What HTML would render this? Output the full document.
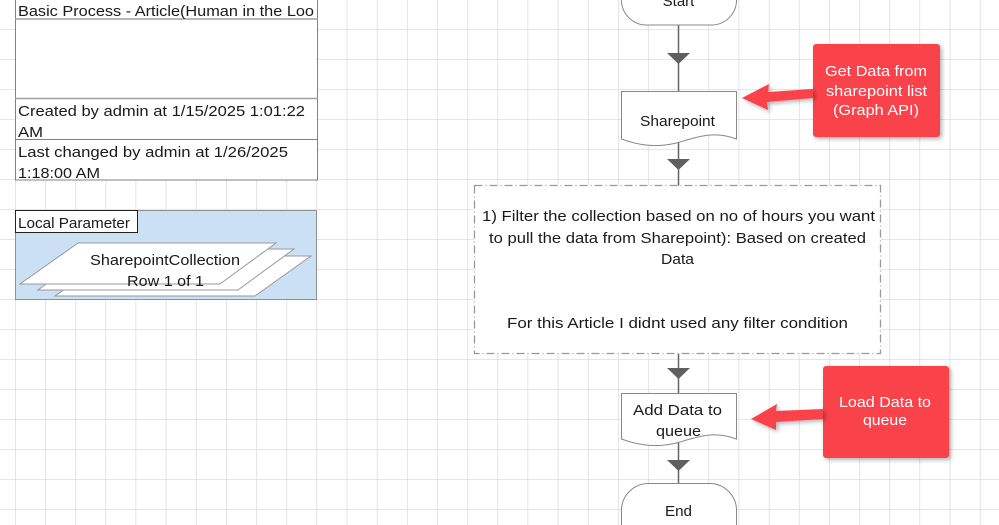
<!DOCTYPE html>
<html><head><meta charset="utf-8"><style>
html,body{margin:0;padding:0;background:#fff;width:999px;height:525px;overflow:hidden;}
svg{display:block;font-family:"Liberation Sans",sans-serif;}
</style></head><body>
<svg width="999" height="525" viewBox="0 0 999 525" xmlns="http://www.w3.org/2000/svg">
<defs>
<pattern id="g" x="15" y="-1" width="30.15" height="30" patternUnits="userSpaceOnUse">
<path d="M0 0V30M0 0H30.15" stroke="#d6d6d6" stroke-width="1.3" fill="none"/>
</pattern>
<filter id="sh" x="-10%" y="-10%" width="130%" height="130%"><feDropShadow dx="2" dy="2" stdDeviation="2" flood-color="#000" flood-opacity="0.3"/></filter>
</defs>
<rect width="999" height="525" fill="url(#g)"/>

<!-- left info box -->
<rect x="15.5" y="-1" width="302" height="181" fill="#fff" stroke="#808080"/>
<line x1="15" y1="19" x2="318" y2="19" stroke="#a0a0a0" stroke-width="1.5"/>
<line x1="15" y1="98.5" x2="318" y2="98.5" stroke="#a0a0a0" stroke-width="1.5"/>
<line x1="15" y1="139.5" x2="318" y2="139.5" stroke="#808080"/>
<g font-size="15" fill="#1a1a1a" lengthAdjust="spacingAndGlyphs">
<text x="18" y="16" textLength="296" lengthAdjust="spacingAndGlyphs">Basic Process - Article(Human in the Loo</text>
<text x="18" y="116" textLength="287" lengthAdjust="spacingAndGlyphs">Created by admin at 1/15/2025 1:01:22</text>
<text x="18" y="137" textLength="25" lengthAdjust="spacingAndGlyphs">AM</text>
<text x="18" y="157" textLength="270" lengthAdjust="spacingAndGlyphs">Last changed by admin at 1/26/2025</text>
<text x="18" y="178" textLength="82" lengthAdjust="spacingAndGlyphs">1:18:00 AM</text>
</g>

<!-- local parameter -->
<rect x="15.5" y="210.5" width="301" height="89" fill="#cce0f4" stroke="#909090"/>
<rect x="15.5" y="210.5" width="122" height="22" fill="#fff" stroke="#222"/>
<text x="18" y="228" font-size="15" fill="#1a1a1a" textLength="112" lengthAdjust="spacingAndGlyphs">Local Parameter</text>
<polygon points="55,296 255,296 311,256 111,256" fill="#fff" stroke="#999"/>
<polygon points="38,290 238,290 294,249 94,249" fill="#fff" stroke="#999"/>
<polygon points="20,284 220,284 276,243 78,243" fill="#fff" stroke="#999"/>
<g font-size="15" fill="#1a1a1a">
<text x="90" y="265" textLength="150" lengthAdjust="spacingAndGlyphs">SharepointCollection</text>
<text x="127" y="286" textLength="77" lengthAdjust="spacingAndGlyphs">Row 1 of 1</text>
</g>

<!-- flow lines -->
<line x1="678.5" y1="24" x2="678.5" y2="485" stroke="#666" stroke-width="1.5"/>
<g fill="#5f5f5f">
<polygon points="667,53 690,53 678.5,64"/>
<polygon points="667,159 690,159 678.5,170"/>
<polygon points="667,368 690,368 678.5,379"/>
<polygon points="667,460 690,460 678.5,471"/>
</g>

<!-- start -->
<rect x="621.5" y="-30" width="115" height="55" rx="25" fill="#fff" stroke="#888"/>
<text x="678.5" y="6" font-size="15" text-anchor="middle" fill="#1a1a1a">Start</text>

<!-- sharepoint doc -->
<path d="M621.5 91.5H736.5V139C715 131 700 136 680 142C660 148 640 146 621.5 139Z" fill="#fff" stroke="#888"/>
<text x="640" y="126" font-size="15" fill="#1a1a1a" textLength="75" lengthAdjust="spacingAndGlyphs">Sharepoint</text>

<!-- dashed process box -->
<rect x="474.5" y="185.5" width="406" height="168" fill="#fff" stroke="#999" stroke-width="1.3" stroke-dasharray="8,3,1,3"/>
<g font-size="15" fill="#1a1a1a">
<text x="482" y="221" textLength="393" lengthAdjust="spacingAndGlyphs">1) Filter the collection based on  no of hours you want</text>
<text x="489" y="243" textLength="377" lengthAdjust="spacingAndGlyphs">to pull the data from Sharepoint):  Based on created</text>
<text x="661" y="264" textLength="33" lengthAdjust="spacingAndGlyphs">Data</text>
<text x="507" y="328" textLength="341" lengthAdjust="spacingAndGlyphs">For this  Article I didnt used any filter condition</text>
</g>

<!-- add data doc -->
<path d="M621.5 393.5H736.5V439C715 431 700 436 680 442C660 448 640 446 621.5 439Z" fill="#fff" stroke="#888"/>
<g font-size="15" fill="#1a1a1a">
<text x="633" y="415" textLength="89" lengthAdjust="spacingAndGlyphs">Add Data to</text>
<text x="656" y="436" textLength="45" lengthAdjust="spacingAndGlyphs">queue</text>
</g>

<!-- end -->
<rect x="621.5" y="483.5" width="115" height="70" rx="27" fill="#fff" stroke="#888"/>
<text x="665" y="516" font-size="15" fill="#1a1a1a" textLength="27" lengthAdjust="spacingAndGlyphs">End</text>

<!-- callout 1 -->
<rect x="813" y="44" width="127" height="93" rx="3" fill="#f9434a" filter="url(#sh)"/>
<g font-size="15" fill="#fff">
<text x="825" y="76" textLength="102" lengthAdjust="spacingAndGlyphs">Get Data from</text>
<text x="826" y="96" textLength="101" lengthAdjust="spacingAndGlyphs">sharepoint list</text>
<text x="833" y="115" textLength="86" lengthAdjust="spacingAndGlyphs">(Graph API)</text>
</g>
<path d="M813 89L768 92L769 84L742 98L768 110L767 102L813 98Z" fill="#f9434a" filter="url(#sh)"/>

<!-- callout 2 -->
<rect x="823" y="366" width="126" height="92" rx="3" fill="#f9434a" filter="url(#sh)"/>
<g font-size="15" fill="#fff">
<text x="839" y="407" textLength="92" lengthAdjust="spacingAndGlyphs">Load Data to</text>
<text x="863" y="425" textLength="44" lengthAdjust="spacingAndGlyphs">queue</text>
</g>
<path d="M823 409L776 411L777 404L751 419L776 430L776 422L823 419Z" fill="#f9434a" filter="url(#sh)"/>
</svg>
</body></html>
